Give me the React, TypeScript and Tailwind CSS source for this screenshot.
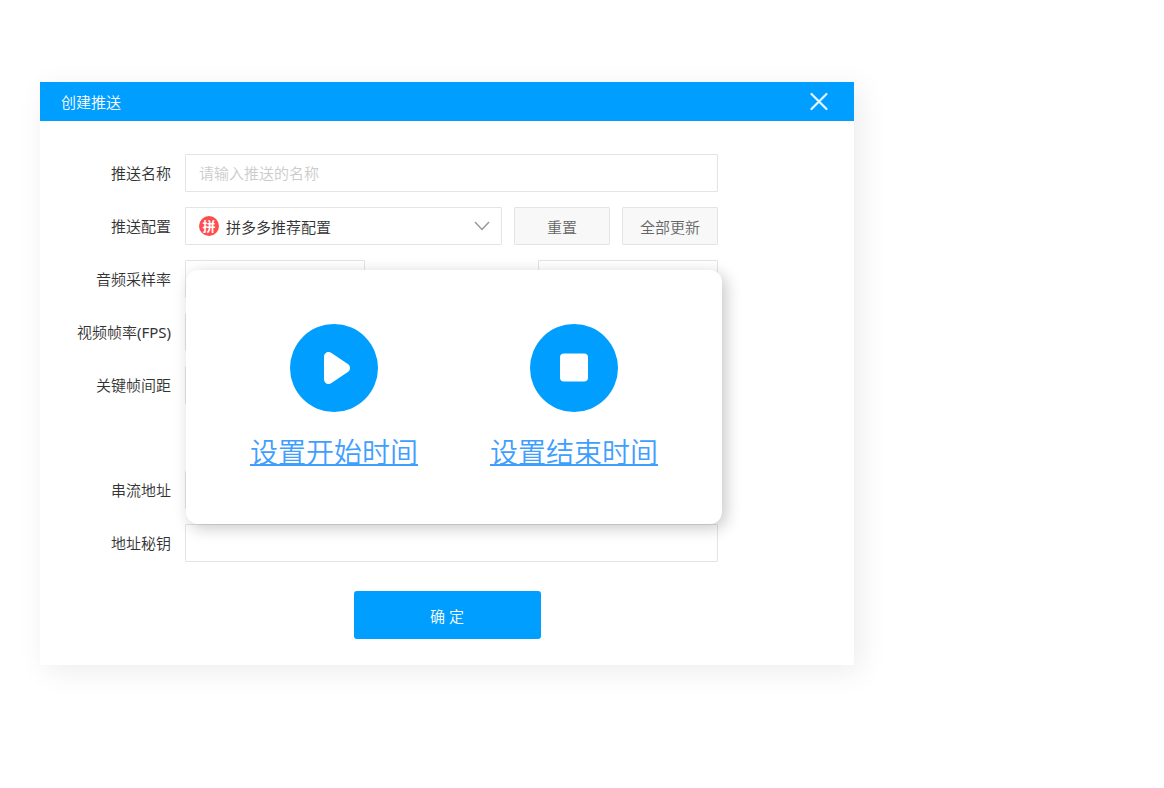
import type { ReactNode } from 'react';

const inputClass =
  'h-[38px] rounded-[1px] border border-[#e4e4e4] bg-white px-[13px] text-[#333] outline-none placeholder:text-[#ccc]';

const grayButtonClass =
  'h-[38px] w-24 rounded-[1px] border border-[#e4e4e4] bg-[#f8f8f8] pt-0.5 text-[#666]';

const FormRow = ({ label, htmlFor, children }: { label: ReactNode; htmlFor: string; children: ReactNode }) => (
  <div className="flex items-center">
    <label htmlFor={htmlFor} className="w-[131px] shrink-0 text-right text-[#333]">
      {label}
    </label>
    <div className="ml-[14px] flex flex-1 items-center justify-between gap-3">{children}</div>
  </div>
);

const PlayIcon = () => (
  <svg viewBox="0 0 88 88" className="size-22" aria-hidden="true">
    <circle cx="44" cy="44" r="44" fill="#009eff" />
    <path
      d="M34 33c0-4.200 4-6.400 7.500-4.100l16.300 11c3 2 3 6.200 0 8.200l-16.300 11C38 61.400 34 59.200 34 55Z"
      fill="#fff"
    />
  </svg>
);

const StopIcon = () => (
  <svg viewBox="0 0 88 88" className="size-22" aria-hidden="true">
    <circle cx="44" cy="44" r="44" fill="#009eff" />
    <rect x="30" y="29.500" width="28" height="28" rx="4" fill="#fff" />
  </svg>
);

const timeActions = [
  { name: '设置开始时间', icon: PlayIcon },
  { name: '设置结束时间', icon: StopIcon },
];

const TimePopup = () => (
  <div className="absolute top-[149px] right-[132px] left-[146px] flex justify-center gap-[72px] rounded-xl bg-white pt-[54px] pb-[52px] shadow-[4px_4px_16px_rgba(0,0,0,0.22)]">
    {timeActions.map((item) => (
      <a key={item.name} href="#" className="flex flex-col items-center gap-5 text-[#409eff]">
        <item.icon />
        <span className="text-[28px] leading-10 whitespace-nowrap underline decoration-2 underline-offset-1">
          {item.name}
        </span>
      </a>
    ))}
  </div>
);

const App = () => {
  return (
    <main className="min-h-screen bg-white px-10 py-[82px] font-['Noto_Sans','Noto_Sans_CJK_SC',sans-serif] text-[15px] leading-5 font-[350]">
      <section className="w-full max-w-[814px] bg-white shadow-[6px_6px_28px_rgba(0,0,0,0.08)]">
        <header className="flex h-[39px] items-center justify-between bg-[#009eff] pr-[25px] pl-[21px] text-white">
          <h1>创建推送</h1>
          <button type="button" aria-label="关闭" className="size-5">
            <svg viewBox="0 0 20 20" fill="none" stroke="#e5f5ff" strokeWidth="2.200" strokeLinecap="round">
              <path d="M2.500 2l15 15M17.500 2l-15 15" />
            </svg>
          </button>
        </header>

        <form className="relative pt-[33px] pb-[26px]" onSubmit={(e) => e.preventDefault()}>
          <div className="mr-[136px] flex flex-col gap-[15px]">
            <FormRow label="推送名称" htmlFor="name">
              <input id="name" className={`${inputClass} w-full`} placeholder="请输入推送的名称" />
            </FormRow>

            <FormRow label="推送配置" htmlFor="config">
              <div className="relative flex-1">
                <select id="config" className={`${inputClass} w-full appearance-none pt-0.5 pl-10`}>
                  <option>拼多多推荐配置</option>
                </select>
                <span className="pointer-events-none absolute top-[9px] left-[14px] flex size-5 items-center justify-center rounded-full bg-[#ff4d4f] text-[13px] leading-none font-bold text-white">
                  拼
                </span>
                <svg
                  viewBox="0 0 16 10"
                  fill="none"
                  stroke="#999"
                  strokeWidth="1.500"
                  className="pointer-events-none absolute top-[14px] right-3 h-[10px] w-4"
                  aria-hidden="true"
                >
                  <path d="M1 1l7 7.500L15 1" />
                </svg>
              </div>
              <button type="button" className={grayButtonClass}>
                重置
              </button>
              <button type="button" className={grayButtonClass}>
                全部更新
              </button>
            </FormRow>

            <FormRow label="音频采样率" htmlFor="sample-rate">
              <input id="sample-rate" className={`${inputClass} w-[180px]`} />
              <input aria-label="音频码率" className={`${inputClass} w-[180px]`} />
            </FormRow>

            <FormRow
              label={
                <>
                  视频帧率<span className="font-normal">(FPS)</span>
                </>
              }
              htmlFor="fps"
            >
              <input id="fps" className={`${inputClass} w-[180px]`} />
            </FormRow>

            <FormRow label="关键帧间距" htmlFor="keyframe">
              <input id="keyframe" className={`${inputClass} w-[180px]`} />
            </FormRow>

            <div className="mt-[52px]">
              <FormRow label="串流地址" htmlFor="stream-url">
                <input id="stream-url" className={`${inputClass} w-full`} />
              </FormRow>
            </div>

            <FormRow label="地址秘钥" htmlFor="stream-key">
              <input id="stream-key" className={`${inputClass} w-full`} />
            </FormRow>
          </div>

          <button
            type="submit"
            className="mx-auto mt-[29px] block h-12 w-[187px] rounded-[3px] bg-[#009eff] pt-0.5 text-white"
          >
            确 定
          </button>

          <TimePopup />
        </form>
      </section>
    </main>
  );
};

export default App;
